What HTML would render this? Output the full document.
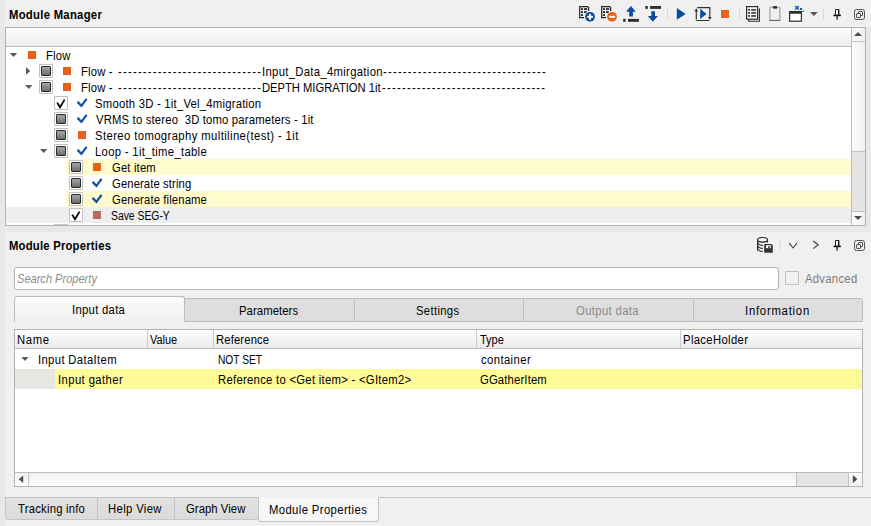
<!DOCTYPE html>
<html><head><meta charset="utf-8">
<style>
*{box-sizing:border-box;margin:0;padding:0}
html,body{width:871px;height:526px;overflow:hidden;background:#f0f0f0}
body{position:relative;font-family:"Liberation Sans",sans-serif;font-size:12px;color:#000}
.a{position:absolute}
.t{position:absolute;white-space:pre;line-height:16px;height:16px;transform-origin:0 0}
.cb{position:absolute;width:14px;height:14px;border:1px solid #c0c0c0;border-radius:1px;background:#fff}
.cb i{position:absolute;left:1px;top:1px;width:10px;height:10px;border:1px solid #2a2a2a;border-radius:1px;background:linear-gradient(#a6a6a6,#6c6c6c)}
.sq{position:absolute;width:8px;height:8px;background:#ea6219}
.ad{position:absolute;width:0;height:0;border-left:3.5px solid transparent;border-right:3.5px solid transparent;border-top:4px solid #666}
.ar{position:absolute;width:0;height:0;border-top:3.5px solid transparent;border-bottom:3.5px solid transparent;border-left:4px solid #666}
svg{position:absolute;overflow:visible}
</style></head><body>
<!-- dark strips -->
<div class="a" style="left:0;top:0;width:5px;height:526px;background:#e8e8e8"></div>
<div class="a" style="left:0;top:226px;width:871px;height:6px;background:#e8e8e8"></div>
<div class="a" style="left:866px;top:27px;width:5px;height:199px;background:#e8e8e8"></div>
<div class="a" style="left:0;top:523px;width:871px;height:3px;background:#e8e8e8"></div>

<!-- ===== Upper panel ===== -->
<svg width="871" height="30" style="left:0;top:0">
<g fill="#262626">
 <!-- add module -->
 <path d="M579.7 6.6 H587.7 L588.6 7.5 V11" fill="none" stroke="#222" stroke-width="1.2"/>
 <path d="M579.7 6 V17.6 H584" fill="none" stroke="#222" stroke-width="1.2"/>
 <rect x="581" y="8.2" width="2" height="1.8"/><rect x="584" y="8.2" width="3.2" height="1.8"/>
 <rect x="581" y="11.2" width="2" height="1.8"/><rect x="584" y="11.2" width="3" height="1.8"/>
 <rect x="581" y="14.2" width="2" height="1.8"/>
</g>
<circle cx="590" cy="16.8" r="5.8" fill="#f6f6f6"/>
<circle cx="590" cy="16.8" r="4.9" fill="#0b4c9d"/>
<rect x="587.2" y="15.9" width="5.7" height="1.9" fill="#fff"/><rect x="589.1" y="13.9" width="1.9" height="5.9" fill="#fff"/>
<g fill="#262626">
 <path d="M601.7 6.6 H609.7 L610.6 7.5 V11" fill="none" stroke="#222" stroke-width="1.2"/>
 <path d="M601.7 6 V17.6 H606" fill="none" stroke="#222" stroke-width="1.2"/>
 <rect x="603" y="8.2" width="2" height="1.8"/><rect x="606" y="8.2" width="3.2" height="1.8"/>
 <rect x="603" y="11.2" width="2" height="1.8"/><rect x="606" y="11.2" width="3" height="1.8"/>
 <rect x="603" y="14.2" width="2" height="1.8"/>
</g>
<circle cx="612" cy="16.8" r="5.8" fill="#f6f6f6"/>
<circle cx="612" cy="16.8" r="4.9" fill="#e9631b"/>
<rect x="609.2" y="15.8" width="5.8" height="2" fill="#fff"/>
<!-- move up -->
<path d="M626 11.8 L630.9 6 L635.8 11.8 H632.9 V16.6 H629.2 V11.8 Z" fill="#0b4c9d"/>
<rect x="623.2" y="18.9" width="2.5" height="2.9" fill="#2e2e2e"/><rect x="628" y="18.9" width="10.9" height="2.9" fill="#2e2e2e"/>
<!-- move down -->
<rect x="645.3" y="6" width="2.5" height="2.9" fill="#2e2e2e"/><rect x="650.1" y="6" width="10.9" height="2.9" fill="#2e2e2e"/>
<path d="M651.3 11.2 H655 V16 H657.9 L652.8 21.8 L647.8 16 H651.3 Z" fill="#0b4c9d"/>
<rect x="667" y="9" width="1" height="10" fill="#d6d6d6"/>
<!-- play -->
<path d="M676.8 8 L685.7 13.9 L676.8 19.8 Z" fill="#0b4c9d"/>
<!-- loop play -->
<path d="M696.3 19.5 V10.5 M697.3 7.7 H709.8 V17.5 M709.3 20.5 H696.3" fill="none" stroke="#333" stroke-width="1.2"/>
<path d="M694.5 11.5 L696.3 8.3 L698.1 11.5 Z M708 17 L709.8 20 L711.6 17 Z" fill="#333"/>
<path d="M700.2 8.8 L706.6 13.9 L700.2 19 Z" fill="#0b4c9d"/>
<!-- stop -->
<rect x="721" y="10" width="8" height="8" fill="#e9631b"/>
<rect x="739" y="9" width="1" height="9.5" fill="#d6d6d6"/>
<!-- list doc -->
<path d="M759.4 8.4 V21.3 H748.6 V19.8" fill="none" stroke="#2a2a2a" stroke-width="1.1"/>
<rect x="746.6" y="6.6" width="11" height="12.6" fill="#f8f8f8" stroke="#2a2a2a" stroke-width="1.2"/>
<g fill="#262626">
<rect x="748" y="9.2" width="2" height="1.5"/><rect x="751.2" y="9.2" width="4.7" height="1.5"/>
<rect x="748" y="12.2" width="2" height="1.5"/><rect x="751.2" y="12.2" width="4.7" height="1.5"/>
<rect x="748" y="15.2" width="2" height="1.5"/><rect x="751.2" y="15.2" width="4.7" height="1.5"/>
</g>
<!-- clipboard -->
<path d="M769.9 20.4 V8.2 Q769.9 7.4 770.7 7.4 H779.1 Q779.9 7.4 779.9 8.2 V20.4" fill="#f0f0f0" stroke="#a8a8a8" stroke-width="1.3"/>
<rect x="769.6" y="19.9" width="10.6" height="1" fill="#555"/>
<rect x="773.1" y="6" width="3.9" height="2.7" fill="#333"/>
<!-- window sparkle -->
<rect x="789.6" y="11.6" width="11.8" height="9.6" fill="#fff" stroke="#2e2e2e" stroke-width="1.2"/>
<path d="M789 11 H801 L802 12 V13.8 H789 Z" fill="#2e2e2e"/>
<path d="M795.2 6 L798.8 9.6 M798.8 6 L795.2 9.6" stroke="#0b4c9d" stroke-width="1.3"/>
<rect x="796.3" y="7.1" width="1.4" height="1.4" fill="#0b4c9d"/>
<path d="M799.9 7.9 L802.3 10.3 M802.3 7.9 L799.9 10.3" stroke="#0b4c9d" stroke-width="1"/>
<circle cx="803.4" cy="11.3" r="0.8" fill="#0b4c9d"/>
<path d="M810 12 L817.8 12 L813.9 15.9 Z" fill="#555"/>
<rect x="823" y="9" width="1" height="9.8" fill="#d6d6d6"/>
</svg>
<svg width="871" height="30" style="left:0;top:0" id="pf1">
<!-- pin -->
<path d="M835.5 15 V9.5 H838.5 V15" fill="#f8f8f8" stroke="#222" stroke-width="1"/>
<rect x="838.1" y="9.3" width="1.3" height="5.6" fill="#111"/>
<rect x="833.5" y="14.6" width="7.4" height="1.6" fill="#111"/>
<rect x="836.3" y="16" width="1.6" height="3.7" fill="#444"/>
<!-- float -->
<rect x="854.5" y="9.5" width="10" height="10" rx="2" fill="none" stroke="#555" stroke-width="1"/>
<rect x="858.5" y="11.5" width="4" height="4" rx="0.5" fill="#f0f0f0" stroke="#555" stroke-width="1"/>
<rect x="856.5" y="13.5" width="4" height="4" rx="0.5" fill="#f0f0f0" stroke="#555" stroke-width="1"/>
</svg>


<!-- tree frame -->
<div class="a" style="left:5px;top:27px;width:861px;height:199px;border:1px solid #b3b3b3;background:#fff"></div>
<div class="a" style="left:6px;top:28px;width:845px;height:19px;border-bottom:1px solid #bebebe;background:linear-gradient(#fefefe,#ebebeb)"></div>
<!-- row highlights -->
<div class="a" style="left:66px;top:159px;width:785px;height:16px;background:#fffbcd"></div>
<div class="a" style="left:66px;top:191px;width:785px;height:16px;background:#fffbcd"></div>
<div class="a" style="left:6px;top:207px;width:845px;height:16px;background:#eeeeee"></div>
<!-- vscrollbar -->
<div class="a" style="left:851px;top:28px;width:14px;height:197px;border-left:1px solid #bdbdbd;background:linear-gradient(90deg,#fdfdfd,#f0f0f0)"></div>
<div class="a" style="left:852px;top:41px;width:13px;height:1px;background:#c4c4c4"></div>
<div class="a" style="left:852px;top:151px;width:13px;height:60px;border-top:1px solid #c2c2c2;background:#e5e5e5"></div>
<div class="a" style="left:852px;top:211px;width:13px;height:1px;background:#c2c2c2"></div>
<div class="a" style="left:852px;top:212px;width:13px;height:13px;background:linear-gradient(90deg,#fdfdfd,#f0f0f0)"></div>



<!-- tree items -->
<div class="sq" style="left:28px;top:51px"></div>
<div class="cb" style="left:39px;top:64px"><i></i></div><div class="sq" style="left:63px;top:67px"></div>
<div class="cb" style="left:39px;top:80px"><i></i></div><div class="sq" style="left:63px;top:83px"></div>
<div class="cb" style="left:54px;top:96px"><svg width="14" height="14" style="left:-1px;top:-1px"><path d="M3.2 6.6 L6 11.2 L10.6 3.6" fill="none" stroke="#000" stroke-width="1.8"/></svg></div>
<svg width="12" height="10" style="left:76px;top:98px"><path d="M1.5 3.9 L5.4 7.8 L10.6 0.8" fill="none" stroke="#0d4fa0" stroke-width="2.2"/></svg>
<div class="cb" style="left:54px;top:112px"><i></i></div>
<svg width="12" height="10" style="left:76px;top:114px"><path d="M1.5 3.9 L5.4 7.8 L10.6 0.8" fill="none" stroke="#0d4fa0" stroke-width="2.2"/></svg>
<div class="cb" style="left:54px;top:128px"><i></i></div><div class="sq" style="left:78px;top:131px"></div>
<div class="cb" style="left:54px;top:144px"><i></i></div>
<svg width="12" height="10" style="left:76px;top:146px"><path d="M1.5 3.9 L5.4 7.8 L10.6 0.8" fill="none" stroke="#0d4fa0" stroke-width="2.2"/></svg>
<div class="cb" style="left:69px;top:160px"><i></i></div><div class="sq" style="left:93px;top:163px"></div>
<div class="cb" style="left:69px;top:176px"><i></i></div>
<svg width="12" height="10" style="left:91px;top:178px"><path d="M1.5 3.9 L5.4 7.8 L10.6 0.8" fill="none" stroke="#0d4fa0" stroke-width="2.2"/></svg>
<div class="cb" style="left:69px;top:192px"><i></i></div>
<svg width="12" height="10" style="left:91px;top:194px"><path d="M1.5 3.9 L5.4 7.8 L10.6 0.8" fill="none" stroke="#0d4fa0" stroke-width="2.2"/></svg>
<div class="cb" style="left:69px;top:208px"><svg width="14" height="14" style="left:-1px;top:-1px"><path d="M3.2 6.6 L6 11.2 L10.6 3.6" fill="none" stroke="#000" stroke-width="1.8"/></svg></div><div class="sq" style="left:93px;top:211px;background:#b0704f"></div>
<div class="a" style="left:54px;top:224px;width:14px;height:1px;background:#c6c6c6"></div>

<!-- ===== Lower panel ===== -->
<div class="a" style="left:5px;top:232px;width:866px;height:294px;background:#f0f0f0"></div>
<svg width="871" height="30" style="left:0;top:231px">
<!-- database (coords y-231) -->
<path d="M757.6 9.2 V19.6" fill="none" stroke="#2a2a2a" stroke-width="1.2"/>
<path d="M767.4 9.2 V11.4" fill="none" stroke="#2a2a2a" stroke-width="1.2"/>
<ellipse cx="762.6" cy="8.8" rx="5" ry="2.3" fill="#f4f4f4" stroke="#2a2a2a" stroke-width="1.2"/>
<path d="M757.6 11.6 Q758.5 14.2 762.8 14.4 M757.6 14.6 Q758.5 17.2 762.8 17.4 M757.6 17.6 Q758.5 20.2 762.8 20.4" fill="none" stroke="#2a2a2a" stroke-width="1.2"/>
<path d="M764.2 13 H771.2 L772.8 14.6 V21.8 H764.2 Z" fill="#333"/>
<rect x="766" y="14.2" width="4.8" height="3" fill="#fff"/>
<rect x="768.2" y="15.2" width="1.6" height="2" fill="#333"/>
<rect x="779.3" y="9" width="1" height="9.6" fill="#d6d6d6"/>
<path d="M789.2 12.2 L793.1 17 L797 12.2" fill="none" stroke="#3c3c3c" stroke-width="1.1"/>
<path d="M813.2 10 L818.3 13.8 L813.2 17.6" fill="none" stroke="#3c3c3c" stroke-width="1.1"/>
<!-- pin -->
<path d="M835.5 15 V9.5 H838.5 V15" fill="#f8f8f8" stroke="#222" stroke-width="1"/>
<rect x="838.1" y="9.3" width="1.3" height="5.6" fill="#111"/>
<rect x="833.5" y="14.6" width="7.4" height="1.6" fill="#111"/>
<rect x="836.3" y="16" width="1.6" height="3.7" fill="#444"/>
<!-- float -->
<rect x="854.5" y="9.5" width="10" height="10" rx="2" fill="none" stroke="#555" stroke-width="1"/>
<rect x="858.5" y="11.5" width="4" height="4" rx="0.5" fill="#f0f0f0" stroke="#555" stroke-width="1"/>
<rect x="856.5" y="13.5" width="4" height="4" rx="0.5" fill="#f0f0f0" stroke="#555" stroke-width="1"/>
</svg>


<!-- search -->
<div class="a" style="left:14px;top:267px;width:765px;height:23px;border:1px solid #b4b4b4;border-radius:3px;background:#fff"></div>
<div class="a" style="left:785px;top:271px;width:14px;height:14px;border:1px solid #bdbdbd;border-radius:1px;background:#f1f1f1"></div>

<!-- tabs -->
<div class="a" style="left:184px;top:298px;width:679px;height:24px;border:1px solid #bcbcbc;border-radius:3px 3px 0 0;background:#dedede"></div>
<div class="a" style="left:354px;top:299px;width:1px;height:22px;background:#bcbcbc"></div>
<div class="a" style="left:523px;top:299px;width:1px;height:22px;background:#bcbcbc"></div>
<div class="a" style="left:693px;top:299px;width:1px;height:22px;background:#bcbcbc"></div>
<div class="a" style="left:14px;top:296px;width:171px;height:26px;border:1px solid #bcbcbc;border-bottom:none;border-radius:3px 3px 0 0;background:linear-gradient(#fbfbfb,#f0f0f0)"></div>

<!-- table -->
<div class="a" style="left:14px;top:329px;width:849px;height:158px;border:1px solid #b3b3b3;background:#fff"></div>
<div class="a" style="left:15px;top:330px;width:847px;height:19px;border-bottom:1px solid #bebebe;background:linear-gradient(#fefefe,#ebebeb)"></div>
<div class="a" style="left:147px;top:330px;width:1px;height:18px;background:#cbcbcb"></div>
<div class="a" style="left:213px;top:330px;width:1px;height:18px;background:#cbcbcb"></div>
<div class="a" style="left:476px;top:330px;width:1px;height:18px;background:#cbcbcb"></div>
<div class="a" style="left:680px;top:330px;width:1px;height:18px;background:#cbcbcb"></div>

<div class="a" style="left:15px;top:369px;width:40px;height:20px;background:#e8e6e3"></div>
<div class="a" style="left:55px;top:369px;width:807px;height:20px;background:#fffa98"></div>
<!-- hscrollbar -->
<div class="a" style="left:15px;top:472px;width:847px;height:14px;border-top:1px solid #bdbdbd;background:linear-gradient(#f0f0f0,#fdfdfd)"></div>
<div class="a" style="left:28px;top:473px;width:1px;height:13px;background:#c4c4c4"></div>
<div class="a" style="left:796px;top:473px;width:52px;height:13px;border-left:1px solid #c2c2c2;background:#e5e5e5"></div>
<div class="a" style="left:848px;top:473px;width:1px;height:13px;background:#c2c2c2"></div>
<div class="a" style="left:849px;top:473px;width:13px;height:13px;background:linear-gradient(#fdfdfd,#f0f0f0)"></div>



<!-- bottom tabs -->
<div class="a" style="left:5px;top:497px;width:866px;height:1px;background:#c4c4c4"></div>
<div class="a" style="left:5px;top:498px;width:254px;height:22px;border:1px solid #c4c4c4;border-top:none;border-radius:0 0 3px 3px;background:linear-gradient(#e1e1e1,#dbdbdb)"></div>
<div class="a" style="left:97px;top:498px;width:1px;height:21px;background:#c4c4c4"></div>
<div class="a" style="left:174px;top:498px;width:1px;height:21px;background:#c4c4c4"></div>
<div class="a" style="left:258px;top:497px;width:121px;height:25px;border:1px solid #c4c4c4;border-top:none;border-radius:0 0 3px 3px;background:#f7f7f7"></div>

<svg width="871" height="526" style="left:0;top:0"><g fill="#5c5c5c"><path d="M9.8 53 H17.2 L13.5 57 Z"/><path d="M26 67.1 L30.3 70.95 L26 74.8 Z"/><path d="M25 85 H32.4 L28.7 89 Z"/><path d="M40 149 H47.4 L43.7 153 Z"/><path d="M21.3 357 H28.7 L25 361 Z"/></g><g fill="#4e4e4e"><path d="M854 36 H862 L858 32 Z"/><path d="M854 216 H862 L858 220 Z"/><path d="M23.2 475.6 V483 L18.8 479.3 Z"/><path d="M852.9 475 L857.3 479.1 L852.9 483.2 Z"/></g></svg>
<div class="t" style="left:8.50px;top:7px;letter-spacing:0.311px;transform:scaleX(0.94);font-weight:bold">Module Manager</div>
<div class="t" style="left:45.86px;top:48px;letter-spacing:0.213px;transform:scaleX(0.94)">Flow</div>
<div class="t" style="left:81.06px;top:64px;letter-spacing:0.196px;transform:scaleX(0.94)">Flow -</div>
<div class="t" style="left:118.00px;top:64px;letter-spacing:1.290px;transform:scaleX(0.94)">-----------------------------</div>
<div class="t" style="left:261.56px;top:64px;letter-spacing:0.340px;transform:scaleX(0.94)">Input_Data_4mirgation</div>
<div class="t" style="left:383.20px;top:64px;letter-spacing:1.287px;transform:scaleX(0.94)">---------------------------------</div>
<div class="t" style="left:81.06px;top:80px;letter-spacing:0.196px;transform:scaleX(0.94)">Flow -</div>
<div class="t" style="left:118.00px;top:80px;letter-spacing:1.290px;transform:scaleX(0.94)">-----------------------------</div>
<div class="t" style="left:261.57px;top:80px;letter-spacing:0.000px;transform:scaleX(0.9325396825396826)">DEPTH MIGRATION 1it</div>
<div class="t" style="left:381.50px;top:80px;letter-spacing:1.301px;transform:scaleX(0.94)">---------------------------------</div>
<div class="t" style="left:95.26px;top:96px;letter-spacing:0.249px;transform:scaleX(0.94)">Smooth 3D - 1it_Vel_4migration</div>
<div class="t" style="left:96.20px;top:112px;letter-spacing:0.187px;transform:scaleX(0.94)">VRMS to stereo  3D tomo parameters - 1it</div>
<div class="t" style="left:95.26px;top:128px;letter-spacing:0.427px;transform:scaleX(0.94)">Stereo tomography multiline(test) - 1it</div>
<div class="t" style="left:95.26px;top:144px;letter-spacing:0.338px;transform:scaleX(0.94)">Loop - 1it_time_table</div>
<div class="t" style="left:111.70px;top:160px;letter-spacing:0.167px;transform:scaleX(0.94)">Get item</div>
<div class="t" style="left:111.70px;top:176px;letter-spacing:0.108px;transform:scaleX(0.94)">Generate string</div>
<div class="t" style="left:111.70px;top:192px;letter-spacing:0.136px;transform:scaleX(0.94)">Generate filename</div>
<div class="t" style="left:110.84px;top:208px;letter-spacing:0.000px;transform:scaleX(0.8641791044776118)">Save SEG-Y</div>
<div class="t" style="left:8.70px;top:238px;letter-spacing:0.233px;transform:scaleX(0.94);font-weight:bold">Module Properties</div>
<div class="t" style="left:17.20px;top:271px;letter-spacing:0.000px;transform:scaleX(0.921590909090909);font-style:italic;color:#8c8c8c">Search Property</div>
<div class="t" style="left:804.70px;top:271px;letter-spacing:0.301px;transform:scaleX(0.94);color:#7a7a7a">Advanced</div>
<div class="t" style="left:71.96px;top:302px;letter-spacing:0.317px;transform:scaleX(0.94)">Input data</div>
<div class="t" style="left:238.56px;top:303px;letter-spacing:0.090px;transform:scaleX(0.94)">Parameters</div>
<div class="t" style="left:416.06px;top:303px;letter-spacing:0.353px;transform:scaleX(0.94)">Settings</div>
<div class="t" style="left:576.40px;top:303px;letter-spacing:0.391px;transform:scaleX(0.94);color:#8a8a8a">Output data</div>
<div class="t" style="left:744.76px;top:303px;letter-spacing:0.823px;transform:scaleX(0.94)">Information</div>
<div class="t" style="left:16.76px;top:332px;letter-spacing:0.660px;transform:scaleX(0.94)">Name</div>
<div class="t" style="left:150.40px;top:332px;letter-spacing:0.000px;transform:scaleX(0.9099999999999995)">Value</div>
<div class="t" style="left:216.06px;top:332px;letter-spacing:0.138px;transform:scaleX(0.94)">Reference</div>
<div class="t" style="left:479.60px;top:332px;letter-spacing:0.000px;transform:scaleX(0.9153846153846137)">Type</div>
<div class="t" style="left:682.66px;top:332px;letter-spacing:0.377px;transform:scaleX(0.94)">PlaceHolder</div>
<div class="t" style="left:38.06px;top:352px;letter-spacing:0.378px;transform:scaleX(0.94)">Input DataItem</div>
<div class="t" style="left:217.75px;top:352px;letter-spacing:0.000px;transform:scaleX(0.8509803921568628)">NOT SET</div>
<div class="t" style="left:481.00px;top:352px;letter-spacing:0.431px;transform:scaleX(0.94)">container</div>
<div class="t" style="left:57.66px;top:372px;letter-spacing:0.433px;transform:scaleX(0.94)">Input gather</div>
<div class="t" style="left:217.56px;top:372px;letter-spacing:0.304px;transform:scaleX(0.94)">Reference to &lt;Get item&gt; - &lt;GItem2&gt;</div>
<div class="t" style="left:480.00px;top:372px;letter-spacing:0.164px;transform:scaleX(0.94)">GGatherItem</div>
<div class="t" style="left:17.70px;top:501px;letter-spacing:0.238px;transform:scaleX(0.94)">Tracking info</div>
<div class="t" style="left:108.16px;top:501px;letter-spacing:0.383px;transform:scaleX(0.94)">Help View</div>
<div class="t" style="left:186.00px;top:501px;letter-spacing:0.069px;transform:scaleX(0.94)">Graph View</div>
<div class="t" style="left:269.36px;top:502px;letter-spacing:0.416px;transform:scaleX(0.94)">Module Properties</div>
</body></html>
